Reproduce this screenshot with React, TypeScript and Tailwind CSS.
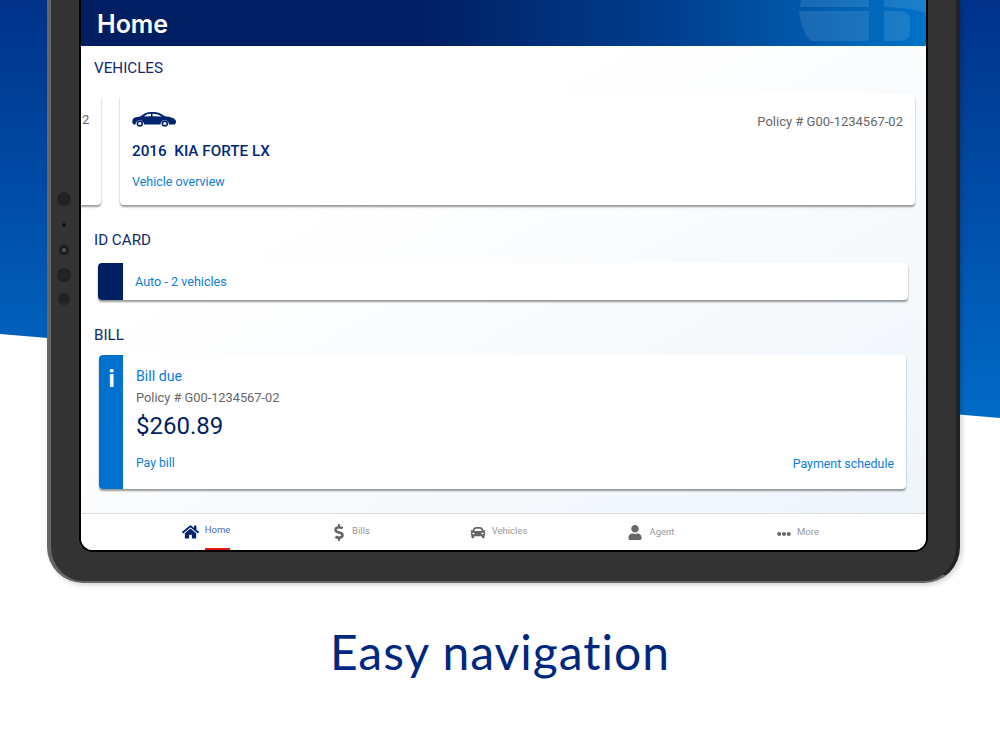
import { FaCar, FaDollarSign, FaEllipsisH, FaHome, FaUser } from "react-icons/fa";

const NAV_ITEMS = [
  { label: "Home", active: true, labelPad: "pt-[10px]", shift: "" },
  { label: "Bills", labelPad: "pt-[11px]", shift: "pr-[4px]" },
  { label: "Vehicles", labelPad: "pt-[11px]", shift: "pr-[7px]" },
  { label: "Agent", labelPad: "pt-[12px]", shift: "pl-[2px]" },
  { label: "More", labelPad: "pt-[12px]", shift: "" },
];

function SectionTitle({ children }: { children: string }) {
  return <h2 className="text-[15.2px] leading-5 text-[#0f2a6b]">{children}</h2>;
}

function SedanIcon() {
  return (
    <svg viewBox="0 0 44 15" className="h-[15px] w-[44px] fill-[#00246f]">
      <path d="M0.5 8C1 6 4 5 8 4.6L13 1.2C17 -0.4 24 -0.4 28 1.2L33 4.2C38 4.6 43 6 44 9C44 11 43.5 12.5 42 12.5H37C36.5 6.5 29 6.5 28.5 12.5H12C11.5 6.5 4 6.5 3.5 12.5H1.5C0.5 11.5 0 10 0.5 8Z" />
      <path d="M12 4.5L15 2.2L19 1.7V4.3Z" fill="#fff" />
      <path d="M20.5 1.7C24 1.6 27 2.6 29.5 4.5L20.5 4.2Z" fill="#fff" />
      <circle cx="7.8" cy="11.5" r="3.2" />
      <circle cx="7.8" cy="11.5" r="1.6" fill="#fff" />
      <circle cx="32.8" cy="11.5" r="3.2" />
      <circle cx="32.8" cy="11.5" r="1.6" fill="#fff" />
    </svg>
  );
}

function NavIcon({ label }: { label: string }) {
  if (label === "Home") return <FaHome className="mb-[2px] h-[16px] w-[17px] text-[#00246f]" />;
  if (label === "Bills") return <FaDollarSign className="mr-[2px] h-[17px] w-[10px] text-[#666]" />;
  if (label === "Vehicles") return <FaCar className="h-[15px] w-[16px] text-[#666]" />;
  if (label === "Agent") return <FaUser className="mr-[2px] h-[15px] w-[14px] text-[#666]" />;
  return <FaEllipsisH className="mt-[3px] h-[14px] w-[14px] text-[#666]" />;
}

export default function App() {
  return (
    <div className="relative h-[750px] w-[1000px] overflow-hidden bg-white font-['Roboto',sans-serif]">
      {/* blue backdrop behind the tablet */}
      <div className="absolute inset-x-0 top-0 h-[420px] bg-gradient-to-b from-[#00328a] to-[#006cc8] [clip-path:polygon(0_0,100%_0,100%_418px,0_334px)]" />

      <div className="relative ml-[47px] flex h-[583px] w-[913px] rounded-b-[36px] border-b-2 border-l-4 border-r-4 border-b-[#666] border-l-[#666] border-r-[#222] bg-[#333] shadow-[2px_2px_5px_rgba(0,0,0,0.18)]">
        <div className="mr-[2px] flex w-[26px] flex-col items-center pt-[192px]">
          <span className="h-[14px] w-[14px] rounded-full bg-[#222]" />
          <span className="mt-[17px] h-[4px] w-[4px] rounded-full bg-[#161616]" />
          <span className="mt-[18px] flex h-[10px] w-[10px] items-center justify-center rounded-full bg-[#1c1c1c]">
            <span className="h-[4px] w-[4px] rounded-full bg-[#555]" />
          </span>
          <span className="mt-[13px] h-[14px] w-[14px] rounded-full bg-[#222]" />
          <span className="mt-[11px] h-[12px] w-[12px] rounded-full bg-[#222]" />
        </div>

        <div className="flex h-[552px] w-[849px] flex-col overflow-hidden rounded-b-[14px] border-x-2 border-b-2 border-black bg-white">
          <header className="relative flex h-[46px] shrink-0 items-center overflow-hidden bg-gradient-to-r from-[#001f63] from-40% via-[#003f8f] via-70% to-[#0072c6] pl-[16px]">
            <h1 className="pt-[2px] font-['Inter',sans-serif] text-[25px] font-semibold leading-none text-white">Home</h1>
            <svg viewBox="0 0 127 46" className="absolute right-0 top-0 h-[46px] w-[127px] fill-white/10">
              <path d="M2 0H70V7H1Z" />
              <path d="M0 11H70V38Q70 41 66 41H12C5 34 1 22 0 11Z" />
              <path d="M85 11H102C108 11 111 15 111 22V32C111 38 107 41 100 41H85Z" />
              <path d="M85 0H127V13C120 11 110 8 85 7Z" />
            </svg>
          </header>

          <main className="flex min-h-0 flex-1 flex-col bg-gradient-to-br from-white from-30% to-[#eef5fb]">
            <div className="pl-[13px] pt-[12px]">
              <SectionTitle>VEHICLES</SectionTitle>
            </div>
            <div className="mt-[16px] flex h-[112px] gap-[19px] pr-[11px]">
              <div className="flex h-[111px] w-[20px] shrink-0 rounded-r-[4px] bg-white pt-[18px] text-[13px] leading-4 text-[#666] shadow-[0_2px_2px_rgba(0,0,0,0.4)]">
                <span className="pl-[1px]">2</span>
              </div>
              <div className="flex h-[111px] flex-1 justify-between rounded-[4px] bg-white pl-[12px] pr-[12px] pt-[18px] shadow-[0_2px_2px_rgba(0,0,0,0.4)]">
                <div>
                  <SedanIcon />
                  <p className="mt-[14px] whitespace-pre text-[15.25px] font-medium leading-5 text-[#00287a]">2016  KIA FORTE LX</p>
                  <a className="mt-[13px] block text-[12.5px] leading-4 text-[#0b7dd8]">Vehicle overview</a>
                </div>
                <p className="pt-[2px] text-[13px] leading-4 text-[#666]">Policy # G00-1234567-02</p>
              </div>
            </div>

            <div className="mt-[24px] pl-[13px]">
              <SectionTitle>ID CARD</SectionTitle>
            </div>
            <div className="ml-[17px] mr-[18px] mt-[13px] flex h-[37px] items-center overflow-hidden rounded-[4px] bg-white shadow-[0_2px_2px_rgba(0,0,0,0.4)]">
              <span className="h-full w-[25px] bg-[#001f63]" />
              <a className="ml-[12px] text-[12.6px] leading-4 text-[#0b7dd8]">Auto - 2 vehicles</a>
            </div>

            <div className="mt-[25px] pl-[13px]">
              <SectionTitle>BILL</SectionTitle>
            </div>
            <div className="ml-[18px] mr-[20px] mt-[10px] flex h-[134px] overflow-hidden rounded-[4px] bg-white shadow-[0_2px_2px_rgba(0,0,0,0.4)]">
              <div className="flex w-[24px] shrink-0 justify-center bg-[#0072ce] pl-[1px] pt-[14px] font-['Inter',sans-serif] text-[23px] font-bold leading-5 text-white">
                i
              </div>
              <div className="flex flex-1 justify-between pl-[13px] pr-[12px] pt-[12px]">
                <div>
                  <p className="text-[14.2px] leading-[18px] text-[#0b7dd8]">Bill due</p>
                  <p className="mt-[5px] text-[12.8px] leading-4 text-[#666]">Policy # G00-1234567-02</p>
                  <p className="mt-[4px] text-[24px] leading-8 text-[#001f63]">$260.89</p>
                  <a className="mt-[13px] block text-[12.2px] leading-4 text-[#0b7dd8]">Pay bill</a>
                </div>
                <a className="self-end pb-[17px] text-[12.4px] leading-4 text-[#0b7dd8]">Payment schedule</a>
              </div>
            </div>
          </main>

          <nav className="grid h-[37px] shrink-0 grid-cols-[repeat(5,148px)] border-t border-[#d8dde0] bg-white pl-[51px]">
            {NAV_ITEMS.map((item) => (
              <div key={item.label} className={`flex items-center justify-center gap-[6px] ${item.shift}`}>
                <NavIcon label={item.label} />
                <span className={`relative h-[37px] text-[9.5px] leading-3 ${item.labelPad} ${item.active ? "text-[#4a6aa5]" : "text-[#999]"}`}>
                  {item.label}
                  {item.active && <span className="absolute inset-x-0 bottom-[1px] h-[2px] bg-[#e8141c]" />}
                </span>
              </div>
            ))}
          </nav>
        </div>
      </div>

      <p className="mt-[36px] text-center font-['Lato',sans-serif] text-[48px] leading-[66px] tracking-[1px] text-[#00287f]">Easy navigation</p>
    </div>
  );
}
